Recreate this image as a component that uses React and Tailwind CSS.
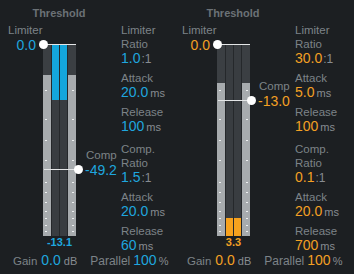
import React from "react";

const TICKS = [45, 74, 95, 115, 137, 147, 157, 166, 173, 180, 186];

const panels = [
    {
        accent: "text-[#1fa6de]",
        fillBg: "bg-[#14a6dc]",
        fill: { top: 0, h: 55 },
        dark: 30,
        comp: { x: 78, y: 146, value: "-49.2" },
        readout: "-13.1",
        limRatio: "1.0",
        limAttack: "20.0",
        limRelease: "100",
        compRatio: "1.5",
        compAttack: "20.0",
        compRelease: "60",
        width: "w-[174px]",
    },
    {
        accent: "text-[#f3a024]",
        fillBg: "bg-[#f7a21e]",
        fill: { top: 173, h: 18 },
        dark: 38,
        comp: { x: 77, y: 77, value: "-13.0" },
        readout: "3.3",
        limRatio: "30.0",
        limAttack: "5.0",
        limRelease: "100",
        compRatio: "0.1",
        compAttack: "20.0",
        compRelease: "700",
        width: "flex-1",
    },
];

function Strip({ dark, side }) {
    return (
        <div className="relative h-full w-[8px] bg-[#a7abae]">
            <div className="absolute left-0 top-0 w-full bg-[#3b3f43]" style={{ height: dark }} />
            {TICKS.filter((t) => t > dark + 4).map((t) => (
                <div
                    key={t}
                    className={`absolute h-px w-[2px] bg-[#eef0f1] ${side === "l" ? "left-[2px]" : "right-[2px]"}`}
                    style={{ top: t }}
                />
            ))}
        </div>
    );
}

function Col({ fill, fillBg }) {
    return (
        <div className="relative h-full w-[7px] bg-[#393d41]">
            <div className={`absolute left-0 w-full ${fillBg}`} style={{ top: fill.top, height: fill.h }} />
        </div>
    );
}

function Label({ children }) {
    return <div className="text-[11.5px] leading-[14px] text-[#7d8388]">{children}</div>;
}

function Val({ v, unit, accent, ratio }) {
    return (
        <div className="flex items-baseline leading-[14px]">
            <span className={`text-[14px] ${accent}`}>{v}</span>
            <span className={`${ratio ? "ml-px text-[12px]" : "ml-[2px] text-[11px]"} text-[#878c91]`}>{unit}</span>
        </div>
    );
}

function Panel({ p }) {
    return (
        <div className={`flex flex-col ${p.width}`}>
            {/* title */}
            <div className="h-[23px] w-[118px] pt-[6px] text-center text-[11px] font-bold leading-[14px] text-[#6b7176]">
                Threshold
            </div>

            <div className="flex h-[225px]">
                {/* meter area */}
                <div className="relative flex w-[121px]">
                    <div className="w-[43px]">
                        <div className="pl-[8px]">
                            <Label>Limiter</Label>
                        </div>
                        <div className={`pr-[7px] text-right text-[14px] leading-[16px] ${p.accent}`}>0.0</div>
                    </div>
                    <div className="flex w-[33px] flex-col">
                        <div className="mt-[22px] flex h-[191px] gap-px bg-[#25282b]">
                            <Strip dark={p.dark} side="l" />
                            <Col fill={p.fill} fillBg={p.fillBg} />
                            <Col fill={p.fill} fillBg={p.fillBg} />
                            <Strip dark={p.dark} side="r" />
                        </div>
                        <div className={`text-center text-[11px] font-bold leading-[12px] ${p.accent}`}>{p.readout}</div>
                    </div>

                    {/* limiter knob */}
                    <div className="absolute left-[43px] top-[21px] h-px w-[33px] bg-[#e4e6e7]" />
                    <div className="absolute left-[38.5px] top-[16.5px] h-[9px] w-[9px] rounded-full bg-white" />

                    {/* comp knob */}
                    <div
                        className="absolute h-px bg-[#e4e6e7]"
                        style={{ left: 44, top: p.comp.y, width: p.comp.x - 44 }}
                    />
                    <div
                        className="absolute h-[9px] w-[9px] rounded-full bg-white"
                        style={{ left: p.comp.x - 4.5, top: p.comp.y - 4.5 }}
                    />
                    <div className="absolute" style={{ left: p.comp.x + 8, top: p.comp.y - 21 }}>
                        <Label>Comp</Label>
                        <div className={`-ml-px text-[14px] leading-[16px] ${p.accent}`}>{p.comp.value}</div>
                    </div>
                </div>

                {/* params */}
                <div className="flex flex-col">
                    <Label>Limiter</Label>
                    <Label>Ratio</Label>
                    <Val v={p.limRatio} unit=":1" accent={p.accent} ratio />
                    <div className="mt-[5px]">
                        <Label>Attack</Label>
                        <Val v={p.limAttack} unit="ms" accent={p.accent} />
                    </div>
                    <div className="mt-[5px]">
                        <Label>Release</Label>
                        <Val v={p.limRelease} unit="ms" accent={p.accent} />
                    </div>
                    <div className="mt-[8px]">
                        <Label>Comp.</Label>
                        <Label>Ratio</Label>
                        <Val v={p.compRatio} unit=":1" accent={p.accent} ratio />
                    </div>
                    <div className="mt-[5px]">
                        <Label>Attack</Label>
                        <Val v={p.compAttack} unit="ms" accent={p.accent} />
                    </div>
                    <div className="mt-[5px]">
                        <Label>Release</Label>
                        <Val v={p.compRelease} unit="ms" accent={p.accent} />
                    </div>
                </div>
            </div>

            {/* footer */}
            <div className="flex items-baseline pt-[4px] leading-[16px]">
                <span className="ml-[13px] text-[11.5px] text-[#7d8388]">Gain</span>
                <span className={`ml-[4px] text-[14px] ${p.accent}`}>0.0</span>
                <span className="ml-[3px] text-[11px] text-[#878c91]">dB</span>
                <span className="ml-[13px] text-[12px] text-[#7d8388]">Parallel</span>
                <span className={`ml-[3px] text-[14px] ${p.accent}`}>100</span>
                <span className="ml-[2px] text-[11px] text-[#878c91]">%</span>
            </div>
        </div>
    );
}

export default function App() {
    return (
        <div className="flex h-[274px] w-[354px] overflow-hidden bg-[#1c1f22] font-['Liberation_Sans',Arial,sans-serif]">
            {panels.map((p, i) => (
                <Panel key={i} p={p} />
            ))}
        </div>
    );
}
